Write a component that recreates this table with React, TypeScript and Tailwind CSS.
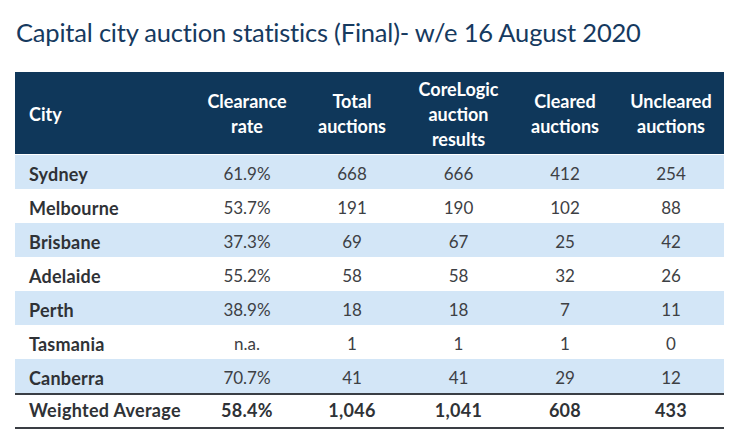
import React from "react";

type Row = { city: string; rate: string; total: string; core: string; cleared: string; uncleared: string };

const rows: Row[] = [
  { city: "Sydney", rate: "61.9%", total: "668", core: "666", cleared: "412", uncleared: "254" },
  { city: "Melbourne", rate: "53.7%", total: "191", core: "190", cleared: "102", uncleared: "88" },
  { city: "Brisbane", rate: "37.3%", total: "69", core: "67", cleared: "25", uncleared: "42" },
  { city: "Adelaide", rate: "55.2%", total: "58", core: "58", cleared: "32", uncleared: "26" },
  { city: "Perth", rate: "38.9%", total: "18", core: "18", cleared: "7", uncleared: "11" },
  { city: "Tasmania", rate: "n.a.", total: "1", core: "1", cleared: "1", uncleared: "0" },
  { city: "Canberra", rate: "70.7%", total: "41", core: "41", cleared: "29", uncleared: "12" },
];

const cols = "grid grid-cols-[180px_104px_106px_107px_106px_106px]";

export default function App() {
  return (
    <div className="w-[743px] h-[441px] bg-white overflow-hidden" style={{ fontFamily: "Lato, 'Open Sans', sans-serif" }}>
      <div className="pt-[16px] pl-[16px] text-[25.5px] leading-[32px] text-[#163a5f] tracking-[-0.2px]">
        Capital city auction statistics (Final)- w/e 16 August 2020
      </div>
      <div className="mt-[24px] ml-[15px] w-[709px]">
        <div className={`${cols} h-[82px] bg-[#0f375a] text-white font-bold text-[18px] leading-[25px] pt-[2px]`}>
          <div className="flex items-center pl-[14px]">City</div>
          <div className="flex items-center justify-center text-center">Clearance<br />rate</div>
          <div className="flex items-center justify-center text-center">Total<br />auctions</div>
          <div className="flex items-center justify-center text-center">CoreLogic<br />auction<br />results</div>
          <div className="flex items-center justify-center text-center">Cleared<br />auctions</div>
          <div className="flex items-center justify-center text-center">Uncleared<br />auctions</div>
        </div>
        <div className="h-[1px] bg-white" />
        {rows.map((r, i) => (
          <div
            key={r.city}
            className={`${cols} h-[34px] pt-[4px] leading-[30px] text-[17px] ${i % 2 === 0 ? "bg-[#d3e6f7]" : "bg-white"}`}
          >
            <div className="pl-[14px] font-bold text-[18px] tracking-[0.2px] text-[#2f3236]">{r.city}</div>
            <div className="text-center text-[#3d4044]">{r.rate}</div>
            <div className="text-center text-[#3d4044]">{r.total}</div>
            <div className="text-center text-[#3d4044]">{r.core}</div>
            <div className="text-center text-[#3d4044]">{r.cleared}</div>
            <div className="text-center text-[#3d4044]">{r.uncleared}</div>
          </div>
        ))}
        <div className="h-[2px] bg-[#3a3e44]" />
        <div className={`${cols} h-[32px] leading-[30px] text-[18px] tracking-[0.3px] font-bold text-[#2f3236]`}>
          <div className="pl-[14px]">Weighted Average</div>
          <div className="text-center">58.4%</div>
          <div className="text-center">1,046</div>
          <div className="text-center">1,041</div>
          <div className="text-center">608</div>
          <div className="text-center">433</div>
        </div>
        <div className="h-[2px] bg-[#3a3e44]" />
      </div>
    </div>
  );
}
